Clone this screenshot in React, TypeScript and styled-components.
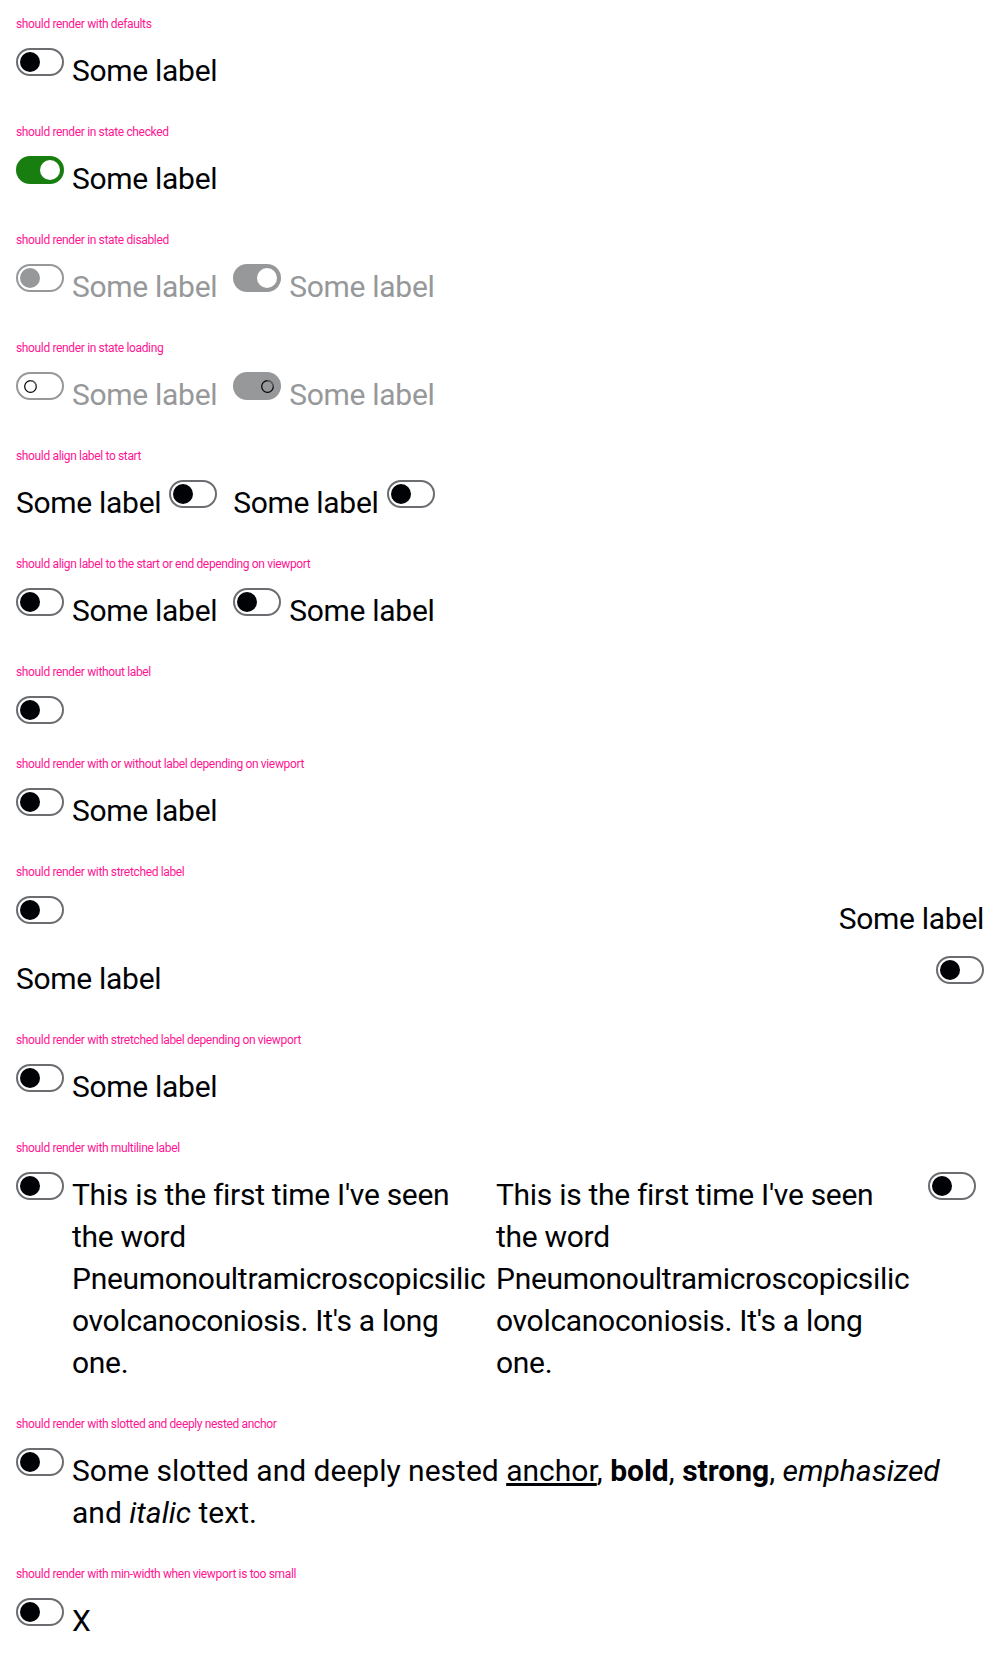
import styled, { createGlobalStyle } from "styled-components";
import type { ReactNode } from "react";

const GlobalStyle = createGlobalStyle`
  body {
    margin: 0;
    background: #fff;
    font-family: Roboto, "Liberation Sans", sans-serif;
  }
`;

const Page = styled.div`
  padding: 16px;
`;

const Section = styled.section`
  margin-bottom: 32px;

  &:last-child {
    margin-bottom: 0;
  }
`;

const Title = styled.p`
  margin: 0 0 16px;
  font-size: 12px;
  line-height: 16px;
  letter-spacing: -0.35px;
  color: deeppink;
`;

const Row = styled.div`
  display: flex;
  align-items: flex-start;
  gap: 16px;
`;

const Column = styled.div`
  display: flex;
  flex-direction: column;
  gap: 16px;
`;

const TwoCols = styled.div`
  display: grid;
  grid-template-columns: 472px 480px;
  column-gap: 8px;
`;

const Root = styled.label<{ $stretch?: boolean }>`
  display: flex;
  align-items: flex-start;
  justify-content: ${(p) => (p.$stretch ? "space-between" : "flex-start")};
  gap: 8px;
  width: ${(p) => (p.$stretch ? "100%" : "auto")};
`;

const Track = styled.span<{ $checked?: boolean; $muted?: boolean }>`
  box-sizing: border-box;
  flex-shrink: 0;
  display: flex;
  align-items: center;
  justify-content: ${(p) => (p.$checked ? "flex-end" : "flex-start")};
  width: 48px;
  height: 28px;
  padding: 0 2px;
  border-radius: 14px;
  border: 2px solid
    ${(p) => (p.$checked ? (p.$muted ? "#96989a" : "#197e10") : p.$muted ? "#96989a" : "#6b6d70")};
  background: ${(p) => (p.$checked ? (p.$muted ? "#96989a" : "#197e10") : "#fff")};
`;

const Knob = styled.span<{ $color: string }>`
  width: 20px;
  height: 20px;
  border-radius: 50%;
  background: ${(p) => p.$color};
`;

const SpinnerBox = styled.span`
  display: flex;
  align-items: center;
  justify-content: center;
  width: 20px;
  height: 20px;
`;

const LabelText = styled.span<{ $muted?: boolean }>`
  min-width: 0;
  padding-top: 2px;
  font-size: 30px;
  line-height: 42px;
  letter-spacing: -0.3px;
  color: ${(p) => (p.$muted ? "#96989a" : "#010205")};
  overflow-wrap: break-word;
`;

const RichText = styled.span`
  letter-spacing: 0;

  a {
    color: inherit;
    text-decoration: underline;
  }

  b,
  strong {
    font-weight: 700;
  }
`;

function Spinner() {
  return (
    <SpinnerBox>
      <svg width="15" height="15" viewBox="0 0 16 16">
        <circle cx="8" cy="8" r="6.2" fill="none" stroke="#010205" strokeWidth="1.3" />
        <path d="M8 1.8 A6.2 6.2 0 0 1 14.2 8" fill="none" stroke="#6b6d70" strokeWidth="1.3" />
      </svg>
    </SpinnerBox>
  );
}

type SwitchProps = {
  label?: ReactNode;
  checked?: boolean;
  disabled?: boolean;
  loading?: boolean;
  alignStart?: boolean;
  stretch?: boolean;
};

function Switch({ label, checked, disabled, loading, alignStart, stretch }: SwitchProps) {
  const muted = disabled || loading;
  const knobColor = checked ? "#fff" : muted ? "#96989a" : "#010205";
  const track = (
    <Track $checked={checked} $muted={muted}>
      {loading ? <Spinner /> : <Knob $color={knobColor} />}
    </Track>
  );
  const text = label ? <LabelText $muted={muted}>{label}</LabelText> : null;
  return (
    <Root $stretch={stretch}>
      {alignStart ? text : track}
      {alignStart ? track : text}
    </Root>
  );
}

const longLabel =
  "This is the first time I've seen the word Pneumonoultramicroscopicsilicovolcanoconiosis. It's a long one.";

function App() {
  return (
    <Page>
      <GlobalStyle />
      <Section>
        <Title>should render with defaults</Title>
        <Row>
          <Switch label="Some label" />
        </Row>
      </Section>
      <Section>
        <Title>should render in state checked</Title>
        <Row>
          <Switch label="Some label" checked />
        </Row>
      </Section>
      <Section>
        <Title>should render in state disabled</Title>
        <Row>
          <Switch label="Some label" disabled />
          <Switch label="Some label" disabled checked />
        </Row>
      </Section>
      <Section>
        <Title>should render in state loading</Title>
        <Row>
          <Switch label="Some label" loading />
          <Switch label="Some label" loading checked />
        </Row>
      </Section>
      <Section>
        <Title>should align label to start</Title>
        <Row>
          <Switch label="Some label" alignStart />
          <Switch label="Some label" alignStart />
        </Row>
      </Section>
      <Section>
        <Title>should align label to the start or end depending on viewport</Title>
        <Row>
          <Switch label="Some label" />
          <Switch label="Some label" />
        </Row>
      </Section>
      <Section>
        <Title>should render without label</Title>
        <Row>
          <Switch />
        </Row>
      </Section>
      <Section>
        <Title>should render with or without label depending on viewport</Title>
        <Row>
          <Switch label="Some label" />
        </Row>
      </Section>
      <Section>
        <Title>should render with stretched label</Title>
        <Column>
          <Switch label="Some label" stretch />
          <Switch label="Some label" stretch alignStart />
        </Column>
      </Section>
      <Section>
        <Title>should render with stretched label depending on viewport</Title>
        <Row>
          <Switch label="Some label" />
        </Row>
      </Section>
      <Section>
        <Title>should render with multiline label</Title>
        <TwoCols>
          <Switch label={longLabel} />
          <Switch label={longLabel} alignStart />
        </TwoCols>
      </Section>
      <Section>
        <Title>should render with slotted and deeply nested anchor</Title>
        <Row>
          <Switch
            label={
              <RichText>
                Some slotted and deeply nested <a href="#">anchor</a>, <b>bold</b>, <strong>strong</strong>,{" "}
                <em>emphasized</em> and <i>italic</i> text.
              </RichText>
            }
          />
        </Row>
      </Section>
      <Section>
        <Title>should render with min-width when viewport is too small</Title>
        <Row>
          <Switch label="X" />
        </Row>
      </Section>
    </Page>
  );
}

export default App;
